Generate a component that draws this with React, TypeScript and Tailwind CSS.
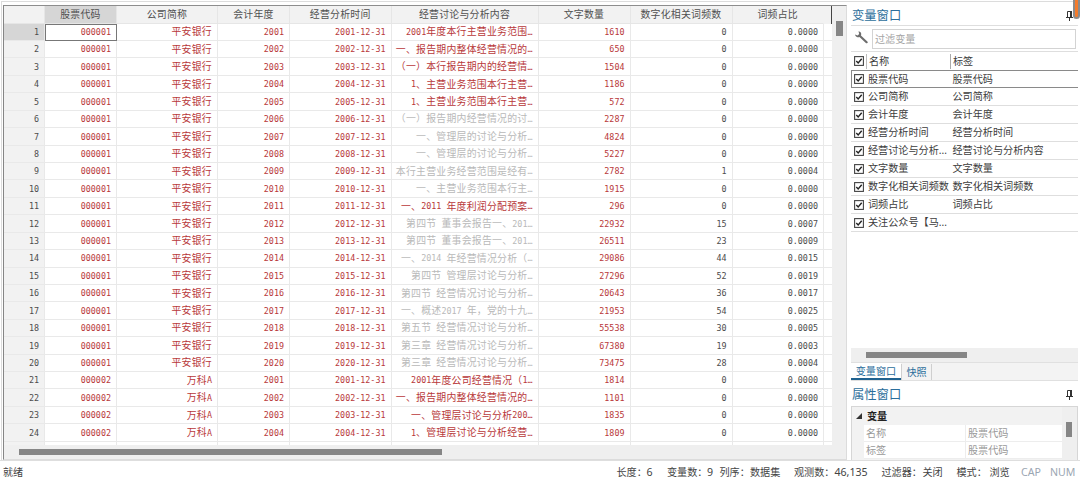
import React from "react";

const DATE = "-12-31";

type Row = [code: string, name: string, year: string, text: string, long: boolean, words: string, hits: string, ratio: string];

const rows: Row[] = [
  ["000001", "平安银行", "2001", "2001年度本行主营业务范围…", false, "1610", "0", "0.0000"],
  ["000001", "平安银行", "2002", "一、报告期内整体经营情况的…", false, "650", "0", "0.0000"],
  ["000001", "平安银行", "2003", "（一）本行报告期内的经营情…", false, "1504", "0", "0.0000"],
  ["000001", "平安银行", "2004", "1、主营业务范围本行主营…", false, "1186", "0", "0.0000"],
  ["000001", "平安银行", "2005", "1、主营业务范围本行主营…", false, "572", "0", "0.0000"],
  ["000001", "平安银行", "2006", "（一）报告期内经营情况的讨…", true, "2287", "0", "0.0000"],
  ["000001", "平安银行", "2007", "一、管理层的讨论与分析…", true, "4824", "0", "0.0000"],
  ["000001", "平安银行", "2008", "一、管理层的讨论与分析…", true, "5227", "0", "0.0000"],
  ["000001", "平安银行", "2009", "本行主营业务经营范围是经有…", true, "2782", "1", "0.0004"],
  ["000001", "平安银行", "2010", "一、主营业务范围本行主…", true, "1915", "0", "0.0000"],
  ["000001", "平安银行", "2011", "一、2011 年度利润分配预案…", false, "296", "0", "0.0000"],
  ["000001", "平安银行", "2012", "第四节 董事会报告一、201…", true, "22932", "15", "0.0007"],
  ["000001", "平安银行", "2013", "第四节 董事会报告一、201…", true, "26511", "23", "0.0009"],
  ["000001", "平安银行", "2014", "一、2014 年经营情况分析（…", true, "29086", "44", "0.0015"],
  ["000001", "平安银行", "2015", "第四节 管理层讨论与分析…", true, "27296", "52", "0.0019"],
  ["000001", "平安银行", "2016", "第四节 经营情况讨论与分析…", true, "20643", "36", "0.0017"],
  ["000001", "平安银行", "2017", "一、概述2017 年，党的十九…", true, "21953", "54", "0.0025"],
  ["000001", "平安银行", "2018", "第五节 经营情况讨论与分析…", true, "55538", "30", "0.0005"],
  ["000001", "平安银行", "2019", "第三章 经营情况讨论与分析…", true, "67380", "19", "0.0003"],
  ["000001", "平安银行", "2020", "第三章 经营情况讨论与分析…", true, "73475", "28", "0.0004"],
  ["000002", "万科A", "2001", "2001年度公司经营情况（1…", false, "1814", "0", "0.0000"],
  ["000002", "万科A", "2002", "一、报告期内整体经营情况的…", false, "1101", "0", "0.0000"],
  ["000002", "万科A", "2003", "一、管理层讨论与分析200…", false, "1835", "0", "0.0000"],
  ["000002", "万科A", "2004", "1、管理层讨论与分析经营…", false, "1809", "0", "0.0000"],
];

const headers = ["股票代码", "公司简称", "会计年度", "经营分析时间", "经营讨论与分析内容", "文字数量", "数字化相关词频数", "词频占比"];

const variables = [
  ["股票代码", "股票代码"],
  ["公司简称", "公司简称"],
  ["会计年度", "会计年度"],
  ["经营分析时间", "经营分析时间"],
  ["经营讨论与分析...", "经营讨论与分析内容"],
  ["文字数量", "文字数量"],
  ["数字化相关词频数", "数字化相关词频数"],
  ["词频占比", "词频占比"],
  ["关注公众号【马...", ""],
];

const GRID = "grid grid-cols-[41px_72px_101px_72px_101.5px_147px_92px_102px_91.5px_8px]";

/* Half-width runs take exactly half the advance of a full-width character. */
function Mono({ children }: { children: string }) {
  const runs = children.match(/[\x20-\x7e…]+|[^\x20-\x7e…]+/g) ?? [];
  return (
    <span className="inline-flex items-center whitespace-pre">
      {runs.map((run, i) =>
        /^[\x20-\x7e…]/.test(run) ? (
          <span key={i} className="pt-px font-['DejaVu_Sans_Mono',monospace] text-[8.4px]">{run}</span>
        ) : (
          <span key={i} className="font-['Noto_Sans_CJK_SC',sans-serif] text-[9.9px] leading-[15px] tracking-[0.25px]">{run}</span>
        )
      )}
    </span>
  );
}

function Cell({ children, className }: { children?: string; className: string }) {
  return (
    <div className={`flex items-center justify-end overflow-hidden border-r border-b border-[#e9e9e9] pr-[5px] ${className}`}>
      {children && <Mono>{children}</Mono>}
    </div>
  );
}

function Check() {
  return (
    <svg viewBox="0 0 10 10" className="h-[10px] w-[10px] shrink-0">
      <rect x="0.6" y="0.6" width="8.8" height="8.8" fill="#fff" stroke="#444" strokeWidth="1.1" />
      <path d="M2.3 5l1.9 2 3.5-4.2" fill="none" stroke="#222" strokeWidth="1.4" />
    </svg>
  );
}

function Pin() {
  return (
    <svg viewBox="0 0 7 10" className="h-[10px] w-[7px]" fill="none" stroke="#333">
      <path d="M1.5 6V0.5h4M0 6.5h7M3.5 6.5V10" strokeWidth="1" />
      <path d="M5 0v6.5" strokeWidth="2" />
    </svg>
  );
}

function DataGrid() {
  return (
    <section className="mt-[3px] ml-px flex h-[455px] w-[844px] shrink-0 flex-col border-t border-r border-b border-l border-t-[#8d8d8d] border-r-[#dcdcdc] border-b-[#dcdcdc] border-l-[#858585] bg-[#efefef]">
      <div className="flex h-[439px] shrink-0">
        <div className="w-[828px] shrink-0 overflow-hidden bg-white">
          <div className={`${GRID} h-[17.6px] bg-[#f2f2f2] text-[#505050]`}>
            <div className="border-r border-b border-[#e6e6e6]" />
            {headers.map((h, i) => (
              <div key={h} className={`flex items-center justify-center border-r border-b border-[#e6e6e6] ${i === 0 ? "bg-[#d6d6d6]" : ""} ${i === 7 ? "border-r-transparent" : ""}`}>
                <Mono>{h}</Mono>
              </div>
            ))}
            <div className="border-r border-[#444]" />
          </div>
          {rows.map((r, i) => (
            <div key={i} className={`${GRID} h-[17.43px] text-[#b8383a]`}>
              <Cell className={i === 0 ? "bg-[#d6d6d6] text-[#4c4c4c]" : "bg-[#f2f2f2] text-[#4c4c4c]"}>{String(i + 1)}</Cell>
              <Cell className={i === 0 ? "outline outline-1 -outline-offset-1 outline-[#777]" : ""}>{r[0]}</Cell>
              <Cell className="">{r[1]}</Cell>
              <Cell className="">{r[2]}</Cell>
              <Cell className="">{r[2] + DATE}</Cell>
              <Cell className={r[4] ? "text-[#b9b9b9]" : ""}>{r[3]}</Cell>
              <Cell className="">{r[5]}</Cell>
              <Cell className="text-[#4c4c4c]">{r[6]}</Cell>
              <Cell className="text-[#4c4c4c]">{r[7]}</Cell>
              <Cell className="border-r-0" />
            </div>
          ))}
          <div className={`${GRID} h-[5px]`}>
            <div className="border-r border-[#e9e9e9] bg-[#f2f2f2]" />
            {headers.map((h) => <div key={h} className="border-r border-[#e9e9e9]" />)}
          </div>
        </div>
        <div className="flex-1 pt-[15px] pl-[4px]">
          <div className="h-[15px] w-[7px] bg-[#868686]" />
        </div>
      </div>
      <div className="pt-[4px] pl-[15px]">
        <div className="h-[6px] w-[423px] bg-[#868686]" />
      </div>
    </section>
  );
}

function PanelTitle({ children }: { children: string }) {
  return <h2 className="text-[12.3px] leading-none font-normal text-[#2c6e9b]">{children}</h2>;
}

function SidePanel() {
  return (
    <aside className="ml-[4px] flex w-[227px] shrink-0 flex-col text-[10.15px] leading-none text-[#3c3c3c]">
      <div className="flex h-[24px] shrink-0 items-center justify-between border-b border-[#dedede] pt-[6px] pr-[5px] pl-px">
        <PanelTitle>变量窗口</PanelTitle>
        <div className="pb-[2px]"><Pin /></div>
      </div>
      <div className="flex h-[25px] shrink-0 items-center pl-[4px]">
        <svg viewBox="0 0 13 13" className="mr-[4px] h-[13px] w-[13px] shrink-0 self-start mt-[5px]">
          <path d="M5.2 5.2L11.6 11.2" stroke="#6d6d6d" strokeWidth="2.2" strokeLinecap="round" />
          <path d="M3.5.3C5.6.5 6.7 2.2 6.1 4.2 5.5 5.9 3.6 6.7 1.9 6 .8 5.5.2 4.6.1 3.6L2.6 4.5 4.2 3z" fill="#6d6d6d" />
        </svg>
        <div className="mr-[2px] flex h-[20px] flex-1 items-center border border-[#d3d3d3] pt-px pl-[2px] text-[#a6a6a6]">过滤变量</div>
      </div>
      <div className="flex h-[19px] shrink-0 items-center border-t border-[#dedede] pl-[3px]">
        <Check />
        <span className="ml-[2px] h-[15px] w-px bg-[#bbb]" />
        <span className="ml-[2px] w-[81px]">名称</span>
        <span className="h-[15px] w-px bg-[#aaa]" />
        <span className="ml-[2px]">标签</span>
      </div>
      <div className="shrink-0">
        {variables.map(([name, label], i) => (
          <div key={name} className={`flex h-[18px] items-center border-b ${i === 0 ? "border-t border-l border-[#8a8a8a] pl-[2px]" : "border-[#dedede] pl-[3px]"}`}>
            <Check />
            <span className="ml-[4px] w-[84.5px] whitespace-nowrap">{name}</span>
            <span>{label}</span>
          </div>
        ))}
      </div>
      <div className="flex-1" />
      <div className="h-[14px] shrink-0 bg-[#efefef] pt-[4px] pl-[15px]">
        <div className="h-[6px] w-[101px] bg-[#868686]" />
      </div>
      <div className="flex h-[19px] shrink-0 border-t border-b border-[#e0e0e0] bg-[#f3f3f3] text-[#2c6e9b]">
        <div className="flex w-[50px] items-center justify-center border-b-2 border-[#20628f] bg-white pt-px">变量窗口</div>
        <div className="mt-px flex w-[31px] items-center justify-center border-r border-l border-[#cfcfcf]">快照</div>
      </div>
      <div className="flex h-[25px] shrink-0 items-center justify-between pt-[3px] pr-[5px] pl-px">
        <PanelTitle>属性窗口</PanelTitle>
        <Pin />
      </div>
      <div className="flex h-[54px] shrink-0 overflow-hidden border-t border-r border-l border-[#d6d6d6] bg-[#f2f2f2]">
        <div className="w-[210px]">
          <div className="flex h-[18px] items-center pl-[4px]">
            <svg viewBox="0 0 6 6" className="h-[6px] w-[6px]"><path d="M6 0v6H0z" fill="#333" /></svg>
            <b className="ml-[5px] text-[#222]">变量</b>
          </div>
          {[["名称", "股票代码"], ["标签", "股票代码"]].map(([k, v]) => (
            <div key={k} className="ml-[12px] flex h-[17px] border-b border-[#ededed] bg-white text-[#999]">
              <span className="flex w-[102px] items-center border-r border-[#ededed] pl-[2px]">{k}</span>
              <span className="flex items-center pl-[2px]">{v}</span>
            </div>
          ))}
        </div>
        <div className="flex-1 bg-[#efefef] pt-[15px] pl-[4px]">
          <div className="h-[15px] w-[6px] bg-[#868686]" />
        </div>
      </div>
    </aside>
  );
}

function StatusBar() {
  return (
    <footer className="flex h-[20px] shrink-0 items-center border-t border-[#dedede] pt-[3px] pl-[3px] text-[10.1px] leading-[16px] whitespace-nowrap text-[#444]">
      <span className="w-[613.5px]">就绪</span>
      <span className="w-[30px]">长度：</span>
      <span className="w-[20.5px] text-[10.6px]">6</span>
      <span className="w-[40px]">变量数：</span>
      <span className="w-[12.5px] text-[10.6px]">9</span>
      <span className="w-[30.5px]">列序：</span>
      <span className="w-[44px]">数据集</span>
      <span className="w-[40.5px]">观测数：</span>
      <span className="w-[47px] text-[10.6px]">46,135</span>
      <span className="w-[41px]">过滤器：</span>
      <span className="w-[34px]">关闭</span>
      <span className="w-[33px]">模式：</span>
      <span className="w-[31.5px]">浏览</span>
      <span className="w-[29px] text-[10.6px] text-[#9ba6b2]">CAP</span>
      <span className="text-[10.6px] text-[#9ba6b2]">NUM</span>
    </footer>
  );
}

export default function App() {
  return (
    <div className="relative flex h-[480px] w-[1080px] flex-col overflow-hidden bg-white font-['Noto_Sans','Noto_Sans_CJK_SC',sans-serif]">
      <div className="mt-px ml-px flex h-[459px] shrink-0 border-t border-l border-[#dcdcdc]">
        <DataGrid />
        <SidePanel />
      </div>
      <StatusBar />
      <div className="absolute top-[-10px] right-0 h-[29px] w-[7px] rounded-full border-2 border-[#8b8b8b] bg-[#f47b2b]" />
    </div>
  );
}
